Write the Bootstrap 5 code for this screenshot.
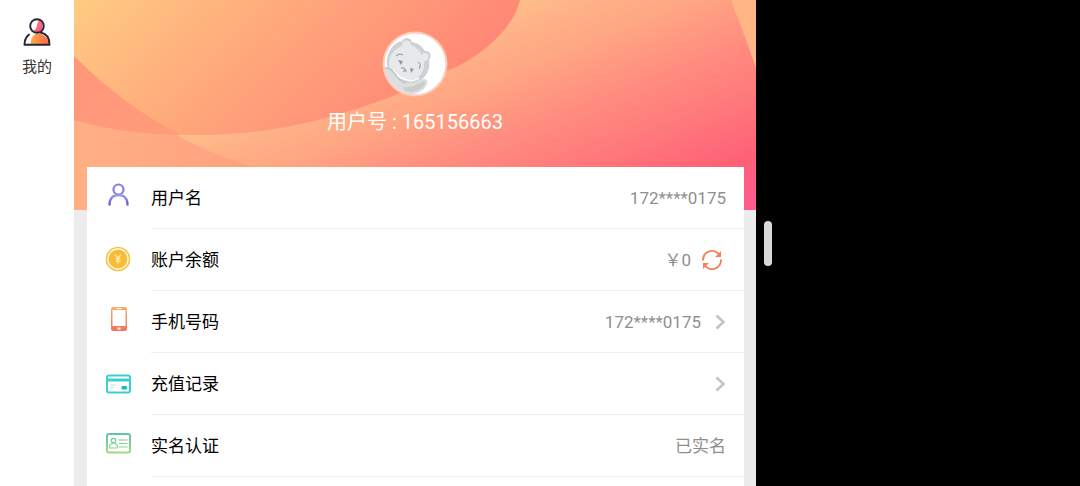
<!DOCTYPE html>
<html lang="zh-CN">
<head>
<meta charset="utf-8">
<meta name="viewport" content="width=device-width, initial-scale=1">
<title>我的</title>
<link href="https://cdn.jsdelivr.net/npm/bootstrap@5.3.0/dist/css/bootstrap.min.css" rel="stylesheet">
<style>
  body { background: #000; font-family: Roboto, "Noto Sans CJK SC", sans-serif; }
  .app-pane { width: 70%; background: #ececec; }
  .side-nav { width: 74px; background: #fff; }
  .side-nav a { color: #333; font-size: 15px; line-height: 22px; }
  .hero { height: 210px; padding-top: 31px; color: #fff; }
  .hero-art { z-index: 0; }
  .hero-body { z-index: 1; }
  .user-id { font-size: 20px; line-height: 30px; margin-top: 10px; }
  .account { margin: -43px 12px 0 13px; background: #fff; z-index: 2; }
  .item { height: 62px; padding-left: 18px; color: #000; font-size: 17px; }
  .item-icon { width: 26px; height: 26px; margin: 0 20px 6px 0; }
  .item-body { border-bottom: 1px solid #eee; padding: 2px 18px 0 0; }
  .item-value { color: #8f8f8f; }
  .refresh { margin: 0 3px 2px 10px; }
  .chevron { margin: 0 0 2px 13px; }
  .grip { width: 8px; height: 45px; margin-left: 8px; background: #d9d9d9; }
</style>
</head>
<body>
<div class="d-flex vh-100 overflow-hidden">
  <div class="app-pane d-flex flex-shrink-0">
    <nav class="side-nav flex-shrink-0 pt-3">
      <a href="#" class="d-flex flex-column align-items-center text-decoration-none">
        <svg width="30" height="32" viewBox="0 0 30 32" fill="none" aria-hidden="true">
          <defs>
            <linearGradient id="meHead" x1="0" y1="0" x2="1" y2="1"><stop offset="0" stop-color="#ff9a70"/><stop offset="1" stop-color="#ff3f88"/></linearGradient>
            <linearGradient id="meBody" x1="0" y1="0" x2="1" y2="0"><stop offset="0" stop-color="#ffac48"/><stop offset="1" stop-color="#ff6744"/></linearGradient>
          </defs>
          <path d="M17 4C21 5 22 11 19 14.500C17 17 13 17 11 15C16 13 14 8 17 4Z" fill="url(#meHead)"/>
          <path d="M8.500 28C9 21 12 18 16 17.500C22 18 26 22 26.500 28Z" fill="url(#meBody)"/>
          <circle cx="15" cy="10" r="6.800" stroke="#282536" stroke-width="1.900"/>
          <path d="M7 18.500C4 21 2.500 24 2.500 28.700H27.500C27.500 22 24 17.500 18.500 16.500" stroke="#282536" stroke-width="1.900" stroke-linecap="round" stroke-linejoin="round"/>
        </svg>
        <span class="mt-2">我的</span>
      </a>
    </nav>
    <main class="flex-grow-1 d-flex flex-column">
      <header class="hero position-relative flex-shrink-0">
        <svg class="hero-art position-absolute top-0 start-0 w-100 h-100" viewBox="0 0 682 210" preserveAspectRatio="none" aria-hidden="true">
          <defs>
            <linearGradient id="sky" gradientUnits="userSpaceOnUse" x1="55" y1="138" x2="166" y2="416"><stop offset="0" stop-color="#ffc48d"/><stop offset=".14" stop-color="#ffb387"/><stop offset=".28" stop-color="#ffa583"/><stop offset=".42" stop-color="#ff9280"/><stop offset=".61" stop-color="#ff7c7c"/><stop offset=".83" stop-color="#ff6077"/><stop offset="1" stop-color="#ff5a94"/></linearGradient>
            <linearGradient id="hill" gradientUnits="userSpaceOnUse" x1="0" y1="0" x2="230" y2="240"><stop offset="0" stop-color="#ffcb82"/><stop offset=".5" stop-color="#ffa67b"/><stop offset="1" stop-color="#ff8575"/></linearGradient>
            <linearGradient id="fold" gradientUnits="userSpaceOnUse" x1="0" y1="70" x2="160" y2="140"><stop offset="0" stop-color="#ff987b"/><stop offset="1" stop-color="#ff9c78"/></linearGradient>
            <linearGradient id="shore" gradientUnits="userSpaceOnUse" x1="0" y1="150" x2="190" y2="150"><stop offset="0" stop-color="#ffb083"/><stop offset="1" stop-color="#ffa080"/></linearGradient>
          </defs>
          <rect width="682" height="210" fill="url(#sky)"/>
          <path d="M0 56C50 105 105 145 180 167L240 210H0Z" fill="url(#shore)"/>
          <path d="M0 0H446C438 34 398 61 373 71C325 97 225 137 120 135C75 134 35 130 0 120Z" fill="url(#hill)"/>
          <path d="M0 56C32 88 68 115 107 135C70 134 35 130 0 120Z" fill="url(#fold)"/>
          <path d="M657 0H682V68Q673 42 657 0Z" fill="#ffb586"/>
        </svg>
        <div class="hero-body position-relative d-flex flex-column align-items-center">
          <svg width="66" height="66" viewBox="0 0 66 66" role="img" aria-label="头像">
            <defs><clipPath id="face"><circle cx="33" cy="33" r="30.500"/></clipPath></defs>
            <circle cx="33" cy="33" r="32.500" fill="#ffc9ba"/>
            <circle cx="33" cy="33" r="30.500" fill="#fff"/>
            <g clip-path="url(#face)">
              <path d="M5 34C4 21 11 12 20 10C22 6 29 6 30 11C36 12 40 15 43 20C49 19 50 26 47 29C49 38 44 47 36 51C24 56 8 49 5 34Z" fill="#cfd2d4"/>
              <path d="M7 33C7 25 12 18 20 15C20 8 28 8 29 14C34 16 38 19 39 24C44 19 49 24 45 29C43 31 43 29 42 30C43 37 40 44 34 48C24 54 8 45 7 33Z" fill="#e8e9ea"/>
              <path d="M1 36C7 36 10 38 12 42C16 49 22 52 29 52C33 53 37 48 43 48C48 49 45 56 39 60C29 67 15 63 7 53Z" fill="#dcdedf"/>
              <path d="M11 39C16 46 22 49 29 50C32 50 35 48 37 47" fill="none" stroke="#fff" stroke-width="1.500"/>
              <path d="M2 37C8 37 10 39 13 43C16 48 20 51 24 52" fill="none" stroke="#bfc5c8" stroke-width="1.500"/>
              <path d="M22 56C30 57 36 53 42 50C46 52 39 59 33 60C27 62 20 59 22 56Z" fill="#c9cdcf"/>
              <path d="M14 25Q17 22 21 24M36 31Q40 33 37 38" fill="none" stroke="#a3a9ad" stroke-width="1.300"/>
              <path d="M16 29L21 30L19 34ZM28 37L32 38L29 42Z" fill="#92989c"/>
              <path d="M19 37Q23 36 24 40L21 40" fill="none" stroke="#a3a9ad" stroke-width="1.300"/>
            </g>
          </svg>
          <div class="user-id">用户号 : 165156663</div>
        </div>
      </header>
      <section class="account position-relative flex-grow-1">
        <div class="item d-flex align-items-center">
          <svg class="item-icon flex-shrink-0" viewBox="0 0 26 26" fill="none" aria-hidden="true">
            <defs><linearGradient id="violet" x1="0" y1="0" x2="0" y2="1"><stop offset="0" stop-color="#9d98e6"/><stop offset="1" stop-color="#6560d6"/></linearGradient></defs>
            <circle cx="13.500" cy="7.500" r="5" stroke="#8580df" stroke-width="2.200"/>
            <path d="M4.500 22.500C4.500 16.500 8 13 13.500 13S22.500 16.500 22.500 22.500" stroke="url(#violet)" stroke-width="2.400" stroke-linecap="round"/>
          </svg>
          <div class="item-body d-flex align-items-center flex-grow-1 h-100"><span class="me-auto">用户名</span><span class="item-value">172****0175</span></div>
        </div>
        <div class="item d-flex align-items-center">
          <svg class="item-icon flex-shrink-0 overflow-visible" viewBox="0 0 26 26" fill="none" aria-hidden="true">
            <circle cx="13" cy="15" r="11.500" stroke="#f8c44b" stroke-width="1.700"/>
            <circle cx="13" cy="15" r="9.500" fill="#f9bd35"/>
            <path d="M10.200 10.500L13 14.500L15.800 10.500M13 14.500V19.500M10.500 15H15.500M10.500 17.200H15.500" stroke="#fff1c8" stroke-width="1.100"/>
          </svg>
          <div class="item-body d-flex align-items-center flex-grow-1 h-100"><span class="me-auto">账户余额</span><span class="item-value">￥0</span>
            <button type="button" class="refresh btn p-0 border-0 d-flex" aria-label="刷新">
              <svg width="22" height="22" viewBox="0 0 22 22" fill="none" aria-hidden="true">
                <path d="M2 11.500A9 9 0 0 1 18.500 6M20 10.500A9 9 0 0 1 3.500 16" stroke="#f5835a" stroke-width="2"/>
                <path d="M20 2V8H14ZM2 20V14H8Z" fill="#f5835a"/>
              </svg>
            </button>
          </div>
        </div>
        <a href="#" class="item d-flex align-items-center text-decoration-none">
          <svg class="item-icon flex-shrink-0" viewBox="0 0 26 26" aria-hidden="true">
            <defs><linearGradient id="phone" x1="0" y1="0" x2="0" y2="1"><stop offset="0" stop-color="#f5b069"/><stop offset="1" stop-color="#f5735c"/></linearGradient></defs>
            <path fill="url(#phone)" fill-rule="evenodd" d="M8 1H20Q22 1 22 3V23Q22 25 20 25H8Q6 25 6 23V3Q6 1 8 1ZM7.500 4V20H20.500V4ZM11.500 2V3H16.500V2ZM12.500 21.500V23.500H15.500V21.500Z"/>
          </svg>
          <div class="item-body d-flex align-items-center flex-grow-1 h-100"><span class="me-auto">手机号码</span><span class="item-value">172****0175</span>
            <svg class="chevron" width="12" height="16" viewBox="0 0 12 16" fill="none" aria-hidden="true"><path d="M2.500 1.500L9.500 8L2.500 14.500" stroke="#c3c3c3" stroke-width="2.600"/></svg>
          </div>
        </a>
        <a href="#" class="item d-flex align-items-center text-decoration-none">
          <svg class="item-icon flex-shrink-0" viewBox="0 0 26 26" fill="none" aria-hidden="true">
            <rect x="2" y="7.500" width="23" height="17" rx="2" stroke="#3bcfce" stroke-width="2"/>
            <path d="M2 12H25" stroke="#3bcfce" stroke-width="3"/>
            <path d="M5.500 17H10.500M5.500 19.500H8" stroke="#a5e6e7"/>
            <rect x="16.500" y="18" width="5.500" height="3.500" rx="1" fill="#22babd"/>
          </svg>
          <div class="item-body d-flex align-items-center flex-grow-1 h-100"><span class="me-auto">充值记录</span>
            <svg class="chevron" width="12" height="16" viewBox="0 0 12 16" fill="none" aria-hidden="true"><path d="M2.500 1.500L9.500 8L2.500 14.500" stroke="#c3c3c3" stroke-width="2.600"/></svg>
          </div>
        </a>
        <div class="item d-flex align-items-center">
          <svg class="item-icon flex-shrink-0" viewBox="0 0 26 26" fill="none" aria-hidden="true">
            <defs><linearGradient id="idCard" gradientUnits="userSpaceOnUse" x1="0" y1="3" x2="0" y2="23"><stop offset="0" stop-color="#5cc7aa"/><stop offset="1" stop-color="#9ddd80"/></linearGradient></defs>
            <g stroke="url(#idCard)">
              <rect x="2" y="4" width="23" height="18.500" rx="2" stroke-width="2"/>
              <circle cx="8.500" cy="10.500" r="2.200" stroke-width="1.300"/>
              <path d="M7.500 12.500V13.500Q5 14 4.500 16V18H12.500V16Q12 14 9.500 13.500V12.500" stroke-width="1.200"/>
              <path d="M13.500 10H22.500M14 13.500H22.500M14 17H22.500" stroke-width="1.100"/>
            </g>
          </svg>
          <div class="item-body d-flex align-items-center flex-grow-1 h-100"><span class="me-auto">实名认证</span><span class="item-value">已实名</span></div>
        </div>
      </section>
    </main>
  </div>
  <div class="grip rounded-pill align-self-center"></div>
</div>
<script src="https://cdn.jsdelivr.net/npm/bootstrap@5.3.0/dist/js/bootstrap.bundle.min.js"></script>
</body>
</html>
